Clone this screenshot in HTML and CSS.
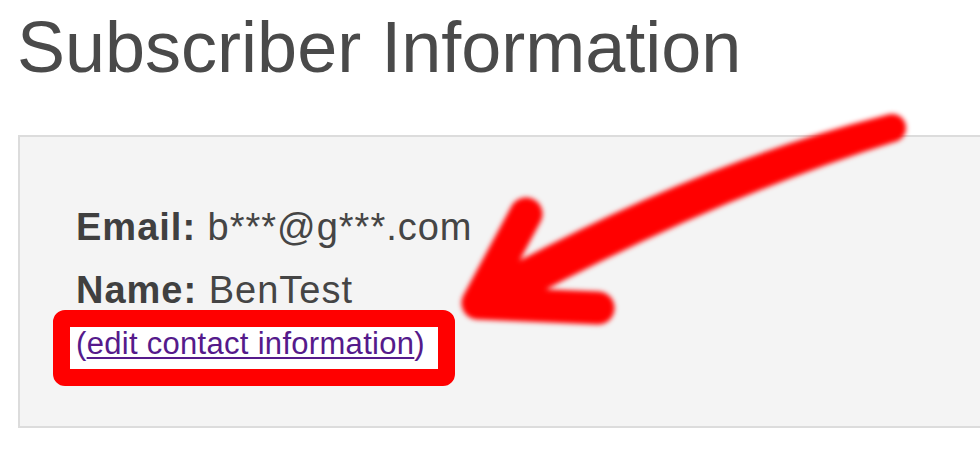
FILE: index.html
```html
<!DOCTYPE html>
<html lang="en">
<head>
    <meta charset="UTF-8">
    <meta name="viewport" content="width=device-width, initial-scale=1.0">
    <title>Subscriber Information</title>
    <link rel="stylesheet" href="styles.css">
</head>
<body>
    <h1>Subscriber Information</h1>
    <div class="panel">
        <p class="row"><b>Email:</b> b***@g***.com</p>
        <p class="row last"><b>Name:</b> BenTest</p>
        <div class="highlight">
            <span class="link-wrap">(<a href="#" class="edit-link">edit contact information</a>)</span>
        </div>
    </div>

    <!-- hand drawn arrow on top of the screenshot -->
    <svg class="arrow" width="980" height="450" viewBox="0 0 980 450">
        <defs>
            <filter id="soft" x="-10%" y="-10%" width="120%" height="120%">
                <feGaussianBlur stdDeviation="2.4"/>
            </filter>
        </defs>
        <g filter="url(#soft)" fill="#ff0000">
            <circle cx="892" cy="128" r="14"/>
            <path d="M886.6 115.1 Q 693 164 482 281 L 498 315 Q 708 200 897.4 140.9 Z"/>
            <path d="M526 214 L 478 303 L 598 308" fill="none" stroke="#ff0000" stroke-width="33" stroke-linecap="round" stroke-linejoin="round"/>
        </g>
    </svg>
</body>
</html>
```

FILE: styles.css
```css
body {
    margin: 0;
    font-family: "Liberation Sans", Arial, sans-serif;
    background-color: #fff;
    color: #454545;
    position: relative;
    overflow: hidden;
    height: 450px;
}
h1 {
    font-size: 72px;
    font-weight: normal;
    line-height: 72px;
    color: #4a4a4a;
    margin: 11px 0 0;
    padding-left: 17px;
}
.panel {
    margin: 52px -40px 0 18px;
    height: 221px;
    padding: 68px 0 0 56px;
    background-color: #f4f4f4;
    border: 2px solid #dcdcdc;
}
.row {
    font-size: 38px;
    line-height: 44px;
    letter-spacing: 1px;
    margin: 0 0 19px;
}
.row.last {
    margin-bottom: -2px;
}
.row b {
    color: #404040;
}
.highlight {
    display: inline-block;
    margin-left: -23px;
    border: 17px solid #ff0000;
    border-radius: 12px;
    background-color: #fff;
    padding: 0 13px 8px 6px;
}
.link-wrap {
    font-size: 31px;
    line-height: 34px;
    letter-spacing: 0.3px;
    color: #551a8b;
}
.edit-link {
    color: #551a8b;
    text-decoration: underline;
    text-decoration-thickness: 2px;
    text-underline-offset: 3px;
}
.arrow {
    position: absolute;
    left: 0;
    top: 0;
    pointer-events: none;
}
```
